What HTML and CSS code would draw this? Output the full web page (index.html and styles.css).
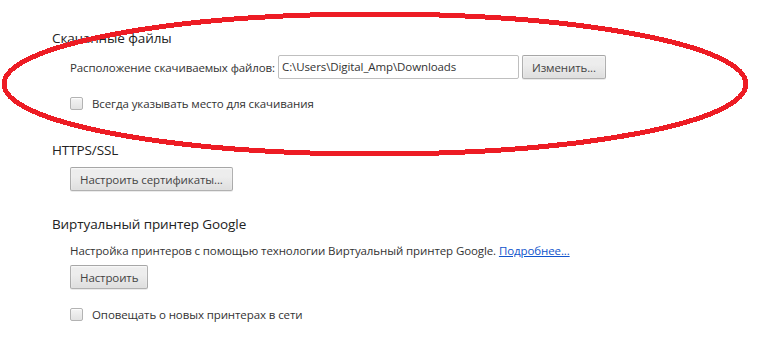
FILE: index.html
```html
<!DOCTYPE html>
<html lang="ru">
<head>
<meta charset="utf-8">
<title>Настройки</title>
<link rel="stylesheet" href="styles.css">
</head>
<body>
<div class="page">
  <section class="sec sec-downloads">
    <h3 class="title">Скачанные файлы</h3>
    <div class="sec-body">
      <div class="row">
        <span class="label">Расположение скачиваемых файлов:</span>
        <span class="field">C:\Users\Digital_Amp\Downloads</span>
        <button class="btn">Изменить...</button>
      </div>
      <label class="check"><span class="box"></span><span>Всегда указывать место для скачивания</span></label>
    </div>
  </section>
  <section class="sec sec-ssl">
    <h3 class="title">HTTPS/SSL</h3>
    <div class="sec-body">
      <button class="btn">Настроить сертификаты...</button>
    </div>
  </section>
  <section class="sec sec-print">
    <h3 class="title">Виртуальный принтер Google</h3>
    <div class="sec-body">
      <p class="desc">Настройка принтеров с помощью технологии Виртуальный принтер Google. <a href="#" class="link">Подробнее...</a></p>
      <div class="row-btn"><button class="btn">Настроить</button></div>
      <label class="check"><span class="box"></span><span>Оповещать о новых принтерах в сети</span></label>
    </div>
  </section>
</div>
<svg class="mark" width="779" height="343" viewBox="0 0 779 343" aria-hidden="true">
  <ellipse cx="375" cy="84" rx="371" ry="70" fill="none" stroke="#ed1c24" stroke-width="5" shape-rendering="crispEdges"/>
</svg>
</body>
</html>
```
FILE: styles.css
```css
html, body {
  margin: 0;
  padding: 0;
  background: #fff;
}
body {
  font-family: "Open Sans", "Noto Sans", sans-serif;
  color: #333;
  font-size: 11.5px;
  letter-spacing: -0.1px;
  position: relative;
  width: 779px;
  height: 343px;
  overflow: hidden;
}
.page {
  padding: 28px 0 0 52px;
  display: flex;
  flex-direction: column;
}
.sec {
  display: flex;
  flex-direction: column;
}
.title {
  margin: 0;
  font-size: 13.5px;
  letter-spacing: -0.1px;
  font-weight: normal;
  line-height: 20px;
  color: #222;
}
.sec-body {
  padding-left: 18px;
  display: flex;
  flex-direction: column;
  align-items: flex-start;
}
.sec-downloads .sec-body { margin-top: 7px; }
.row {
  display: flex;
  align-items: center;
  height: 24px;
}
.label {
  margin-right: 3px;
}
.field {
  box-sizing: border-box;
  width: 241px;
  height: 24px;
  line-height: 22px;
  border: 1px solid #bfbfbf;
  border-radius: 2px;
  padding: 0 3px;
  color: #333;
  margin-right: 3px;
}
.btn {
  box-sizing: border-box;
  height: 24px;
  margin: 0;
  padding: 0 9px;
  font: inherit;
  letter-spacing: inherit;
  color: #444;
  border: 1px solid rgba(0,0,0,0.25);
  border-radius: 2px;
  background: linear-gradient(#ededed, #ededed 38%, #dedede);
  box-shadow: 0 1px 0 rgba(0,0,0,0.08), inset 0 1px 2px rgba(255,255,255,0.75);
}
.check {
  display: flex;
  align-items: center;
  height: 20px;
  gap: 9px;
}
.sec-downloads .check { margin-top: 14px; }
.box {
  box-sizing: border-box;
  width: 13px;
  height: 13px;
  border: 1px solid #b3b3b3;
  border-radius: 2px;
  background: linear-gradient(#f4f4f4, #e2e2e2);
  box-shadow: inset 0 1px 1px rgba(255,255,255,0.8);
}
.sec-ssl { margin-top: 27px; }
.sec-ssl .sec-body { margin-top: 7px; }
.sec-print { margin-top: 23px; }
.desc {
  margin: 8px 0 0;
  line-height: 18px;
}
.link {
  color: #15c;
  text-decoration: underline;
}
.row-btn { margin-top: 5px; }
.sec-print .check { margin-top: 15px; }
.mark {
  position: absolute;
  left: 0;
  top: 0;
  pointer-events: none;
}
```
